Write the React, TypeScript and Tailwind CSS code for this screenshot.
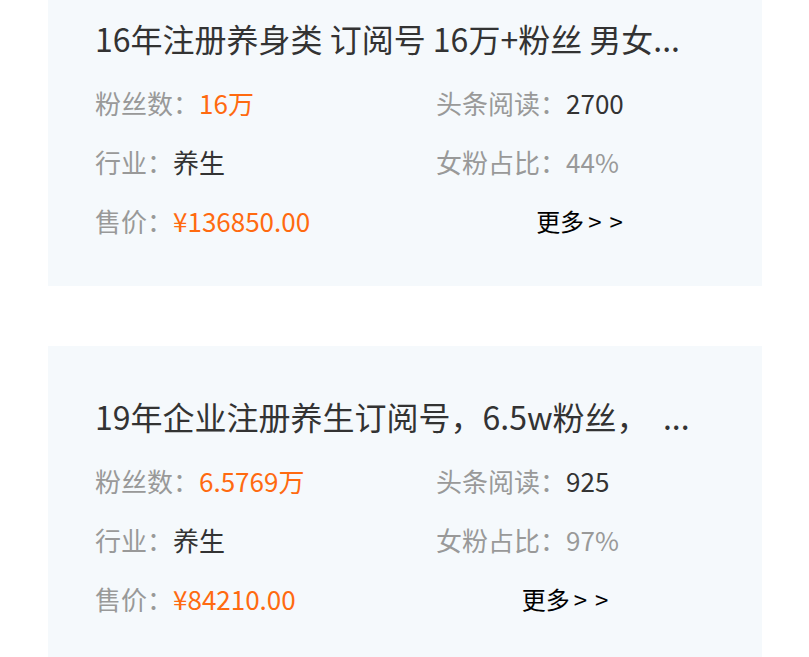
import React from "react";

type Item = {
  title: string;
  fans: string;
  reads: string;
  industry: string;
  female: string;
  price: string;
};

const items: Item[] = [
  {
    title: "16年注册养身类 订阅号 16万+粉丝 男女...",
    fans: "16万",
    reads: "2700",
    industry: "养生",
    female: "44%",
    price: "¥136850.00",
  },
  {
    title: "19年企业注册养生订阅号，6.5w粉丝，  ...",
    fans: "6.5769万",
    reads: "925",
    industry: "养生",
    female: "97%",
    price: "¥84210.00",
  },
];

function Card({ item, first }: { item: Item; first: boolean }) {
  return (
    <div
      className={
        "w-[714px] bg-[#f5f9fc] pl-[47px] pr-[47px] pt-[48px] pb-[36px] " +
        (first ? "mt-[-32px]" : "mt-[60px]")
      }
    >
      <div className="text-[32px] leading-[44px] text-[#333333] whitespace-pre overflow-hidden">
        {item.title}
      </div>
      <div className="mt-[13px] grid grid-cols-[341px_1fr] text-[26px]">
        <div className="h-[59px] flex items-center">
          <span className="text-[#999999]">粉丝数：</span>
          <span className="text-[#ff6a10]">{item.fans}</span>
        </div>
        <div className="h-[59px] flex items-center">
          <span className="text-[#999999]">头条阅读：</span>
          <span className="text-[#333333]">{item.reads}</span>
        </div>
        <div className="h-[59px] flex items-center">
          <span className="text-[#999999]">行业：</span>
          <span className="text-[#333333]">{item.industry}</span>
        </div>
        <div className="h-[59px] flex items-center">
          <span className="text-[#999999]">女粉占比：</span>
          <span className="text-[#999999]">{item.female}</span>
        </div>
        <div className="col-span-2 h-[59px] flex items-center whitespace-nowrap">
          <span className="text-[#999999]">售价：</span>
          <span className="text-[#ff6a10]">{item.price}</span>
          <span className="ml-[226px] text-[24px] text-black">
            更多<span className="ml-[4px]">&gt;</span>
            <span className="ml-[8px]">&gt;</span>
          </span>
        </div>
      </div>
    </div>
  );
}

export default function App() {
  return (
    <div
      className="w-[809px] h-[657px] overflow-hidden bg-white pl-[48px]"
      style={{ fontFamily: '"Noto Sans CJK SC", "Noto Sans", sans-serif' }}
    >
      {items.map((it, i) => (
        <Card key={i} item={it} first={i === 0} />
      ))}
    </div>
  );
}
